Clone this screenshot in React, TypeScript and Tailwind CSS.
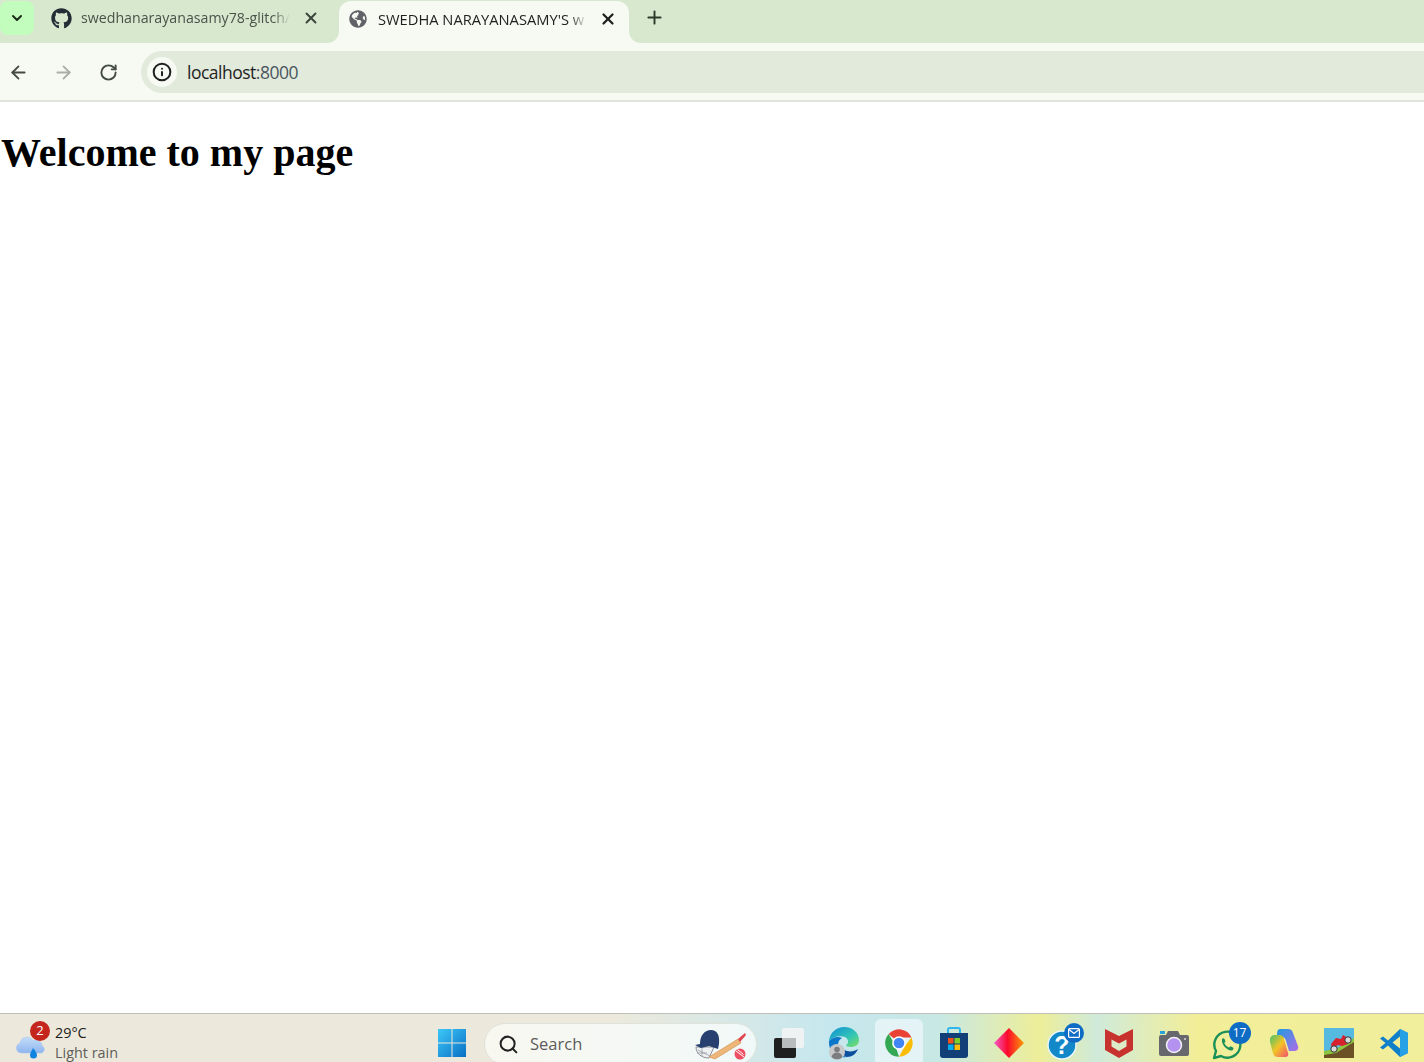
import { ArrowLeft, ArrowRight, RotateCw, X, Plus, ChevronDown, Info, Search } from "lucide-react";
import { FaGithub, FaGlobeAmericas } from "react-icons/fa";

const uiFont = "font-['Open_Sans','Noto_Sans',sans-serif]";

function WeatherIcon() {
  return (
    <svg width="34" height="34" viewBox="0 0 34 34">
      <defs>
        <linearGradient id="cloud" x1="0" y1="0" x2="0" y2="1">
          <stop offset="0" stopColor="#c3dcfa" />
          <stop offset="1" stopColor="#8fb6ee" />
        </linearGradient>
      </defs>
      <path d="M7 25a5 5 0 0 1-1-9.800 7 7 0 0 1 13-2.500 6 6 0 0 1 9 5 4 4 0 0 1 0 7.300z" fill="url(#cloud)" stroke="#a9c6ef" strokeWidth="0.6" />
      <path d="M19 20c2 2.500 4 5 4 7a3.400 3.400 0 0 1-7 0c0-1.500 1.500-4 3-7z" fill="#1183e0" />
    </svg>
  );
}

function WinLogo() {
  return (
    <svg width="30" height="30" viewBox="0 0 30 30">
      <defs>
        <linearGradient id="win" x1="0" y1="0" x2="1" y2="1">
          <stop offset="0" stopColor="#3cc8f8" />
          <stop offset="1" stopColor="#0a6fc4" />
        </linearGradient>
      </defs>
      <path d="M1 1h13.500v13.500H1zM15.500 1H29v13.500H15.500zM1 15.500h13.500V29H1zM15.500 15.500H29V29H15.500z" fill="url(#win)" />
    </svg>
  );
}

function CricketIcon() {
  return (
    <svg width="54" height="32" viewBox="0 0 54 32">
      <path d="M2 19c0 6 5 11 13 11l5-11z" fill="#eef0f2" stroke="#8a8f96" strokeWidth="1" />
      <path d="M4 22l12 6M3 25h10M8 20v8" stroke="#9aa0a6" strokeWidth="0.8" />
      <path d="M1 17l5-1C6 7 11 2 17 2c6 0 9 5 8 14l-1 5-9-3-8 2z" fill="#27406f" />
      <path d="M15 29L44 11l3 4-26 16z" fill="#eeb678" stroke="#cd8d4e" strokeWidth="0.6" />
      <path d="M44 11l7-6 1 2-6 7z" fill="#e0454e" />
      <circle cx="46" cy="26" r="5.500" fill="#ef4f63" />
      <path d="M42 23l8 6M43.500 21.500l6 5" stroke="#fff" strokeWidth="1" />
    </svg>
  );
}

function TaskViewIcon() {
  return (
    <svg width="32" height="32" viewBox="0 0 32 32">
      <rect x="1" y="11" width="22" height="20" rx="2" fill="#1f1f1f" />
      <rect x="9" y="1" width="22" height="20" rx="2" fill="#f1f3f3" fillOpacity="0.92" />
      <rect x="9" y="11" width="14" height="10" fill="#b8bcbd" />
    </svg>
  );
}

function EdgeIcon() {
  return (
    <svg width="32" height="34" viewBox="0 0 32 34">
      <defs>
        <linearGradient id="edgeA" x1="0" y1="0" x2="1" y2="1">
          <stop offset="0" stopColor="#0f8ed6" />
          <stop offset="0.6" stopColor="#33c6b4" />
          <stop offset="1" stopColor="#7fe05c" />
        </linearGradient>
      </defs>
      <path d="M1 15C2 6 9 1 16 1c9 0 15 6 15 13 0 5-4 7-8 7-3 0-5-1-5-2 3-1 3-6-1-8-6-2-12 0-16 4z" fill="url(#edgeA)" />
      <path d="M1 15c4-4 9-5 13-3-4 2-5 7-3 12 1 3 4 6 8 7-9 2-19-5-18-16z" fill="#0c76c9" />
      <path d="M19 31c5 0 9-3 11-8-3 2-7 3-11 2-3-1-5-2-6-4 0 5 2 9 6 10z" fill="#0b4f9e" />
      <circle cx="9" cy="26" r="8" fill="#c7c8c9" />
      <circle cx="9" cy="23.500" r="2.800" fill="#7b7d7f" />
      <path d="M3.500 31c1-3.500 3-4.500 5.500-4.500s4.500 1 5.500 4.500a8 8 0 0 1-11 0z" fill="#7b7d7f" />
    </svg>
  );
}

function ChromeIcon() {
  return (
    <svg width="30" height="30" viewBox="0 0 48 48">
      <path d="M24 24L7.500 9.500A22 22 0 0 1 44 15H24z" fill="#ea4335" />
      <path d="M24 46A22 22 0 0 1 7.500 9.500L18 28z" fill="#34a853" />
      <path d="M44 15a22 22 0 0 1-20 31l10-18z" fill="#fbbc04" />
      <circle cx="24" cy="24" r="11" fill="#fff" />
      <circle cx="24" cy="24" r="8.500" fill="#4285f4" />
    </svg>
  );
}

function StoreIcon() {
  return (
    <svg width="30" height="32" viewBox="0 0 30 32">
      <path d="M9 7V3a2 2 0 0 1 2-2h8a2 2 0 0 1 2 2v4" fill="none" stroke="#2eb6ee" strokeWidth="2" />
      <path d="M1 6h28v22a3 3 0 0 1-3 3H4a3 3 0 0 1-3-3z" fill="#123f78" />
      <rect x="9" y="11" width="5.500" height="5.500" fill="#f1511b" />
      <rect x="15.500" y="11" width="5.500" height="5.500" fill="#80cc28" />
      <rect x="9" y="17.500" width="5.500" height="5.500" fill="#00adef" />
      <rect x="15.500" y="17.500" width="5.500" height="5.500" fill="#fbbc09" />
    </svg>
  );
}

function DiamondIcon() {
  return (
    <svg width="30" height="30" viewBox="0 0 30 30">
      <defs>
        <linearGradient id="dia" x1="0" y1="0" x2="1" y2="0">
          <stop offset="0" stopColor="#f35bc8" />
          <stop offset="0.45" stopColor="#fb0a2c" />
          <stop offset="1" stopColor="#fb9b05" />
        </linearGradient>
      </defs>
      <path d="M15 0l15 15-15 15L0 15z" fill="url(#dia)" />
    </svg>
  );
}

function HelpIcon() {
  return (
    <div className="relative h-[34px] w-[34px]">
      <svg width="30" height="30" viewBox="0 0 30 30" className="absolute bottom-0 left-0">
        <circle cx="15" cy="15" r="14" fill="#1288c9" stroke="#e7f5fa" strokeWidth="1.500" />
        <text x="15" y="24" textAnchor="middle" fontSize="25" fontWeight="700" fill="#fff" fontFamily="Liberation Sans">?</text>
      </svg>
      <div className="absolute right-[-3px] top-[-3px] flex h-5 w-5 items-center justify-center rounded-full bg-[#0f6cc5]">
        <svg width="12" height="10" viewBox="0 0 12 10">
          <rect x="0.600" y="0.600" width="10.800" height="8.800" rx="1" fill="none" stroke="#fff" strokeWidth="1.200" />
          <path d="M1 1.500l5 4 5-4" fill="none" stroke="#fff" strokeWidth="1.200" />
        </svg>
      </div>
    </div>
  );
}

function McAfeeIcon() {
  return (
    <svg width="28" height="30" viewBox="0 0 28 30">
      <path d="M0 1l14 7 14-7v21l-14 8-14-8z" fill="#c8322e" />
      <path d="M6.500 11.500L14 15.500l7.500-4v7L14 23l-7.500-4.500z" fill="#dcecc8" />
    </svg>
  );
}

function CameraIcon() {
  return (
    <svg width="30" height="26" viewBox="0 0 30 26">
      <rect x="1" y="1" width="5" height="3" fill="#2aa3dc" />
      <path d="M9 1h10l2 4h7a2 2 0 0 1 2 2v17a2 2 0 0 1-2 2H2a2 2 0 0 1-2-2V7a2 2 0 0 1 2-2h5z" fill="#66686d" />
      <circle cx="15" cy="15" r="7.500" fill="#b392f0" stroke="#f1f1f4" strokeWidth="1.500" />
      <circle cx="26" cy="9" r="1" fill="#d7d7d7" />
    </svg>
  );
}

function WhatsAppIcon() {
  return (
    <div className="relative h-[34px] w-[34px]">
      <svg width="30" height="30" viewBox="0 0 30 30" className="absolute bottom-0 left-0">
        <path d="M2 28l2-7a13 13 0 1 1 5 5z" fill="#f2f0a0" fillOpacity="0.4" stroke="#1b9058" strokeWidth="2.400" strokeLinejoin="round" />
        <path d="M10 9c1-1 2-1 2.500 0l1 2.500-1.200 1.500c1 2 2.500 3.500 4.700 4.500l1.500-1.300 2.500 1.200c.8.500.6 1.600-.2 2.500-3 2.500-12-4-10.800-10.900z" fill="#1b9058" />
      </svg>
      <div className={`absolute right-[-5px] top-[-4px] flex h-[22px] w-[22px] items-center justify-center rounded-full bg-[#0f6cc5] text-[12px] text-white ${uiFont}`}>17</div>
    </div>
  );
}

function CopilotIcon() {
  return (
    <svg width="30" height="30" viewBox="0 0 30 30">
      <defs>
        <linearGradient id="copA" x1="0" y1="0" x2="1" y2="1">
          <stop offset="0" stopColor="#1e9be0" />
          <stop offset="1" stopColor="#b06ce8" />
        </linearGradient>
        <linearGradient id="copB" x1="0" y1="0" x2="1" y2="1">
          <stop offset="0" stopColor="#49c46a" />
          <stop offset="0.5" stopColor="#f4c326" />
          <stop offset="1" stopColor="#f0506e" />
        </linearGradient>
      </defs>
      <path d="M11 1h8c3 0 4 1 5 4l5 13c1 3-1 5-4 5h-5l-3-10c-1-3-2-4-4-4H8c0-4 0-8 3-8z" fill="url(#copA)" />
      <path d="M1 12C1 9 3 7 6 7h5c2 0 3 1 4 4l4 14c1 3-1 4-3 4H9c-3 0-4-1-5-4L1 14z" fill="url(#copB)" />
    </svg>
  );
}

function GameIcon() {
  return (
    <svg width="30" height="30" viewBox="0 0 30 30">
      <rect width="30" height="30" fill="#55b9e0" />
      <path d="M0 25l12-2 18-11v18H0z" fill="#6d5126" />
      <path d="M0 23l12-2 18-11v4L12 25 0 27z" fill="#8cc63f" />
      <path d="M7 16l5-6 5 1 2-4 5 3-2 4 2 2-6 2-4-1-6 3z" fill="#d8212f" />
      <circle cx="10" cy="21" r="3.200" fill="#d9d9d9" stroke="#333" />
      <circle cx="24" cy="12" r="3.200" fill="#d9d9d9" stroke="#333" />
    </svg>
  );
}

function VsCodeIcon() {
  return (
    <svg width="30" height="30" viewBox="0 0 30 30">
      <path d="M21 1l8 4v20l-8 4-12-11.500-5 4-3-2 5.500-4.500L1 10.500l3-2 5 4z" fill="#0f7fc9" />
      <path d="M21 1l8 4v20l-8 4z" fill="#27a1e6" />
      <path d="M21 8.500l-7.500 6 7.500 6z" fill="#f2ee9a" />
    </svg>
  );
}

const taskIcons = [
  <TaskViewIcon key="task" />,
  <EdgeIcon key="edge" />,
  <ChromeIcon key="chrome" />,
  <StoreIcon key="store" />,
  <DiamondIcon key="dia" />,
  <HelpIcon key="help" />,
  <McAfeeIcon key="mc" />,
  <CameraIcon key="cam" />,
  <WhatsAppIcon key="wa" />,
  <CopilotIcon key="cop" />,
  <GameIcon key="game" />,
  <VsCodeIcon key="vs" />,
];

export default function App() {
  return (
    <div className={`flex h-[1062px] w-[1424px] flex-col overflow-hidden bg-white ${uiFont}`}>
      {/* Tab strip */}
      <div className="flex h-[43px] shrink-0 items-start bg-[#d7e8cf]">
        <div className="ml-0 mt-px flex h-[34px] w-[34px] items-center justify-center rounded-lg bg-[#c3fdbd]">
          <ChevronDown size={16} strokeWidth={3} className="text-[#1c2a1a]" />
        </div>
        <div className="ml-[17px] flex h-[36px] w-[288px] items-center">
          <FaGithub size={21} className="shrink-0 text-[#242d35]" />
          <span className="ml-[9px] -mt-px w-[209px] whitespace-nowrap text-[14.200px] text-[#4b5249] [mask-image:linear-gradient(to_right,black_92%,transparent)]">swedhanarayanasamy78-glitch/</span>
          <X size={18} strokeWidth={2.5} className="ml-[12px] shrink-0 text-[#3a4439]" />
        </div>
        <div className="relative mt-px flex h-[42px] w-[290px] items-start rounded-t-[12px] bg-[#f6faf2] pl-[10px] pt-[8px]">
          <div className="absolute bottom-0 left-[-12px] h-3 w-3 bg-[#f6faf2]">
            <div className="h-3 w-3 rounded-br-[12px] bg-[#d7e8cf]" />
          </div>
          <div className="absolute bottom-0 right-[-12px] h-3 w-3 bg-[#f6faf2]">
            <div className="h-3 w-3 rounded-bl-[12px] bg-[#d7e8cf]" />
          </div>
          <FaGlobeAmericas size={18} className="mt-px shrink-0 text-[#5f6368]" />
          <span className="ml-[11px] -mt-px w-[209px] whitespace-nowrap text-[14.700px] text-[#1f1f1f] [mask-image:linear-gradient(to_right,black_92%,transparent)]">SWEDHA NARAYANASAMY'S w</span>
          <X size={18} strokeWidth={3} className="ml-[12px] mt-px shrink-0 text-[#1f1f1f]" />
        </div>
        <Plus size={21} strokeWidth={2.2} className="ml-[15px] mt-[7px] text-[#2c3a2b]" />
      </div>

      {/* Toolbar */}
      <div className="flex h-[59px] shrink-0 items-start border-b-2 border-[#e0e3dc] bg-[#f6faf2] pt-2">
        <div className="flex h-[42px] w-[141px] items-center pl-[8px]">
          <ArrowLeft size={21} strokeWidth={2.1} className="text-[#434b41]" />
          <ArrowRight size={21} strokeWidth={2.1} className="ml-[24px] text-[#a9afa5]" />
          <RotateCw size={19} strokeWidth={2.4} className="ml-[25px] text-[#434b41]" />
        </div>
        <div className="flex h-[42px] flex-1 items-center rounded-l-full bg-[#e2eadb] pl-[6px]">
          <div className="flex h-[30px] w-[30px] items-center justify-center rounded-full bg-[#f6faf2]">
            <Info size={20} strokeWidth={2.4} className="text-[#1f1f1f]" />
          </div>
          <span className="ml-[10px] text-[17.500px] tracking-[-0.5px] text-[#1f1f1f]">
            localhost<span className="text-[#4a5560]">:8000</span>
          </span>
        </div>
      </div>

      {/* Page */}
      <div className="flex-1 bg-white pl-px pt-[28px]">
        <h1 className="font-['Liberation_Serif',serif] text-[40px] font-bold leading-[46px] text-black">Welcome to my page</h1>
      </div>

      {/* Taskbar */}
      <div className="flex h-[49px] shrink-0 items-start overflow-hidden border-t border-[#bdbfb8] bg-[linear-gradient(90deg,#ece9dc_0%,#ece9dc_43%,#c6e7ee_58%,#c8e8e4_66%,#eeee98_73%,#cfeada_77%,#f2ee98_84%,#f1ee9c_100%)]">
        <div className="flex w-[435px] items-start pl-[14px] pt-[9px]">
          <div className="relative mt-[5px] h-[34px] w-[34px]">
            <WeatherIcon />
            <div className="absolute right-[-2px] top-[-7px] flex h-5 w-5 items-center justify-center rounded-full bg-[#c4261d] text-[13px] text-white">2</div>
          </div>
          <div className="ml-[7px] flex flex-col text-[14.400px] leading-[20px]">
            <span className="text-[#1c1c1c]">29°C</span>
            <span className="text-[#5d5d5a]">Light rain</span>
          </div>
        </div>
        <div className="flex w-[49px] shrink-0 pl-[2px] pt-[14px]">
          <WinLogo />
        </div>
        <div className="mt-[9px] flex h-[42px] w-[273px] shrink-0 items-center rounded-full border border-[#dfe3dc] bg-[linear-gradient(90deg,#f8f7f0,#f1f9f8)] pl-[13px] pr-[8px]">
          <Search size={21} strokeWidth={2.3} className="text-[#222]" />
          <span className="ml-[11px] flex-1 text-[16.500px] text-[#5c5c5a]">Search</span>
          <CricketIcon />
        </div>
        <div className="ml-[4px] flex items-start pt-[5px]">
          {taskIcons.map((icon, i) => (
            <div key={i} className="flex h-[48px] w-[55px] items-center justify-center">
              <div className={i === 2 ? "flex h-[48px] w-[48px] items-center justify-center rounded-t-md bg-[#e4f3f6]" : "flex items-center justify-center"}>
                {icon}
              </div>
            </div>
          ))}
        </div>
      </div>
    </div>
  );
}
